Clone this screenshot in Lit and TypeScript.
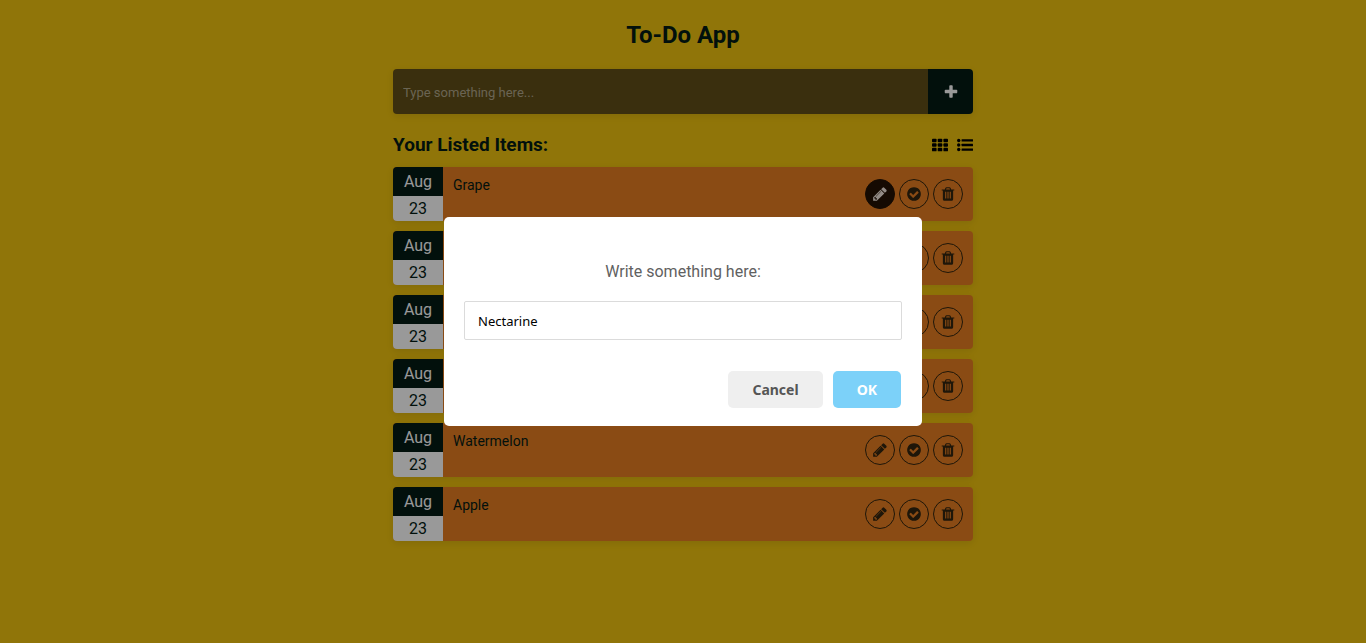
import { LitElement, html, css, svg } from "lit";
import { customElement, property, state } from "lit/decorators.js";
import { classMap } from "lit/directives/class-map.js";

const bar = (x: number) =>
  `M${x} 1376v-704q0-14-9-23t-23-9h-64q-14 0-23 9t-9 23v704q0 14 9 23t23 9h64q14 0 23-9t9-23z`;

const glyphs: Record<string, string> = {
  plus: "M1600 736v192q0 40-28 68t-68 28h-416v416q0 40-28 68t-68 28h-192q-40 0-68-28t-28-68v-416h-416q-40 0-68-28t-28-68v-192q0-40 28-68t68-28h416v-416q0-40 28-68t68-28h192q40 0 68 28t28 68v416h416q40 0 68 28t28 68z",
  pencil:
    "M491 1536l91-91-235-235-91 91v107h128v128h107zm523-928q0-22-22-22-10 0-17 7l-542 542q-7 7-7 17 0 22 22 22 10 0 17-7l542-542q7-7 7-17zm-54-192l416 416-832 832h-416v-416zm683 96q0 53-37 90l-166 166-416-416 166-165q36-38 90-38 53 0 91 38l235 234q37 39 37 91z",
  check:
    "M1412 734q0-28-18-46l-91-90q-19-19-45-19t-45 19l-408 407-226-226q-19-19-45-19t-45 19l-91 90q-18 18-18 46 0 27 18 45l362 362q19 19 45 19 27 0 46-19l543-543q18-18 18-45zm252 162q0 209-103 385.5t-279.5 279.5-385.5 103-385.5-103-279.5-279.5-103-385.5 103-385.5 279.5-279.5 385.5-103 385.5 103 279.5 279.5 103 385.5z",
  trash:
    bar(704) + bar(960) + bar(1216) +
    "M672 384h448l-48-117q-7-9-17-11h-317q-10 2-17 11zM1600 416v64q0 14-9 23t-23 9h-96v948q0 83-47 143.5t-113 60.5h-832q-66 0-113-58.5t-47-141.5v-952h-96q-14 0-23-9t-9-23v-64q0-14 9-23t23-9h309l70-167q15-37 54-63t79-26h320q40 0 79 26t54 63l70 167h309q14 0 23 9t9 23z",
};

const icon = (name: string) => {
  if (name === "grid") {
    return html`<svg class="icon" viewBox="0 0 1792 1792" aria-hidden="true">
      ${[192, 704, 1216].map((y) =>
        [0, 640, 1280].map((x) => svg`<rect x=${x} y=${y} width="512" height="384" rx="96"></rect>`)
      )}
    </svg>`;
  }
  if (name === "list") {
    return html`<svg class="icon" viewBox="0 0 1792 1792" aria-hidden="true">
      ${[384, 896, 1408].map(
        (y) => svg`<circle cx="192" cy=${y} r="192"></circle>
          <rect x="512" y=${y - 128} width="1280" height="256" rx="32"></rect>`
      )}
    </svg>`;
  }
  return html`<svg class="icon" viewBox="0 0 1792 1792" aria-hidden="true">
    <path fill-rule="evenodd" d=${glyphs[name]}></path>
  </svg>`;
};

const base = css`
  *,
  *::before,
  *::after {
    box-sizing: border-box;
  }
  button {
    font-family: inherit;
    border: 0;
    padding: 0;
    cursor: pointer;
  }
  .icon {
    display: block;
    width: 16px;
    height: 16px;
    fill: currentColor;
  }
`;

@customElement("todo-item")
class TodoItem extends LitElement {
  @property() name = "";
  @property() month = "";
  @property() day = "";
  @property({ type: Boolean }) editing = false;

  static styles = [
    base,
    css`
      :host {
        display: flex;
        min-height: 54px;
        border-radius: 4px;
        overflow: hidden;
        background: #e67e22;
        box-shadow: 0 2px 8px rgba(0, 0, 0, 0.1);
        color: #041b15;
      }
      .date {
        flex: 0 0 50px;
        display: flex;
        flex-direction: column;
        text-align: center;
        font-size: 16px;
      }
      .month {
        line-height: 29px;
        background: #041b15;
        color: #fff;
      }
      .day {
        flex: 1;
        line-height: 25px;
        background: #fff;
      }
      .name {
        flex: 1;
        margin: 0;
        padding: 8px 10px;
        font-size: 14px;
        line-height: 20px;
      }
      .actions {
        display: flex;
        align-items: center;
        gap: 4px;
        padding-right: 10px;
      }
      .action {
        display: grid;
        place-items: center;
        width: 30px;
        height: 30px;
        border: 1px solid #33250f;
        border-radius: 50%;
        background: transparent;
        color: #33250f;
      }
      .action.active {
        background: #241204;
        border-color: #241204;
        color: #f4e8df;
      }
    `,
  ];

  render() {
    const labels = { pencil: "Edit", check: "Complete", trash: "Delete" };
    return html`
      <time class="date"><span class="month">${this.month}</span><span class="day">${this.day}</span></time>
      <p class="name">${this.name}</p>
      <div class="actions">
        ${Object.entries(labels).map(
          ([glyph, label]) => html`<button
            type="button"
            class=${classMap({ action: true, active: this.editing && glyph === "pencil" })}
            aria-label="${label} ${this.name}"
          >
            ${icon(glyph)}
          </button>`
        )}
      </div>
    `;
  }
}

@customElement("app-root")
class AppRoot extends LitElement {
  @state() items = ["Grape", "Orange", "Mango", "Banana", "Watermelon", "Apple"];

  static styles = [
    base,
    css`
      :host {
        display: block;
        min-height: 100vh;
        background: #f1c40f;
        color: #041b15;
        font-family: Roboto, sans-serif;
      }
      .page {
        max-width: 600px;
        margin: 0 auto;
        padding: 20px 10px;
      }
      .title {
        margin: 0 0 19px;
        font-size: 24px;
        line-height: 30px;
        text-align: center;
      }
      .add {
        display: flex;
        height: 45px;
        border-radius: 4px;
        overflow: hidden;
        box-shadow: 0 2px 8px rgba(0, 0, 0, 0.1);
      }
      .entry {
        flex: 1;
        min-width: 0;
        border: 0;
        padding: 2px 10px 0;
        background: #614f18;
        color: #fff;
        font: 13px Roboto, sans-serif;
      }
      .entry::placeholder {
        color: #b1a78b;
        opacity: 1;
      }
      .submit {
        display: grid;
        place-items: center;
        width: 45px;
        background: #041b15;
        color: #fff;
      }
      .bar {
        display: flex;
        align-items: center;
        justify-content: space-between;
        margin: 19px 0 11px;
      }
      .heading {
        margin: 0;
        font-size: 19px;
        line-height: 23px;
      }
      .views {
        display: flex;
        gap: 9px;
      }
      .view {
        background: transparent;
        color: #000;
      }
      .items {
        display: grid;
        gap: 10px;
      }
      .overlay {
        position: fixed;
        inset: 0;
        display: grid;
        place-items: center;
        background: rgba(0, 0, 0, 0.4);
      }
      .modal {
        width: 478px;
        max-width: calc(100% - 20px);
        border-radius: 5px;
        background: #fff;
        padding: 45px 20px 18px;
      }
      .prompt {
        display: block;
        font-size: 16px;
        line-height: 20px;
        text-align: center;
        color: #616161;
      }
      .value {
        display: block;
        width: 100%;
        height: 39px;
        margin: 19px 0 31px;
        border: 1px solid #dbdbdb;
        border-radius: 2px;
        padding: 0 13px;
        color: #000;
        font: 13px "Noto Sans", sans-serif;
      }
      .buttons {
        display: flex;
        justify-content: flex-end;
        gap: 10px;
        padding-right: 1px;
      }
      .choice {
        height: 37px;
        padding: 0 24px;
        border-radius: 5px;
        background: #efefef;
        color: #555;
        font: 700 14px "Noto Sans", sans-serif;
      }
      .choice.ok {
        background: #7cd1f9;
        color: #fff;
      }
    `,
  ];

  render() {
    return html`
      <main class="page">
        <h1 class="title">To-Do App</h1>
        <form class="add">
          <input class="entry" type="text" placeholder="Type something here..." aria-label="New item" />
          <button class="submit" type="button" aria-label="Add item">${icon("plus")}</button>
        </form>
        <div class="bar">
          <h2 class="heading">Your Listed Items:</h2>
          <div class="views">
            <button class="view" type="button" aria-label="Grid view">${icon("grid")}</button>
            <button class="view" type="button" aria-label="List view">${icon("list")}</button>
          </div>
        </div>
        <section class="items">
          ${this.items.map(
            (name, i) => html`<todo-item name=${name} month="Aug" day="23" ?editing=${i === 0}></todo-item>`
          )}
        </section>
      </main>
      <div class="overlay">
        <div class="modal" role="dialog" aria-modal="true">
          <label class="prompt" for="value">Write something here:</label>
          <input class="value" id="value" type="text" .value=${"Nectarine"} />
          <div class="buttons">
            <button class="choice" type="button">Cancel</button>
            <button class="choice ok" type="button">OK</button>
          </div>
        </div>
      </div>
    `;
  }
}
